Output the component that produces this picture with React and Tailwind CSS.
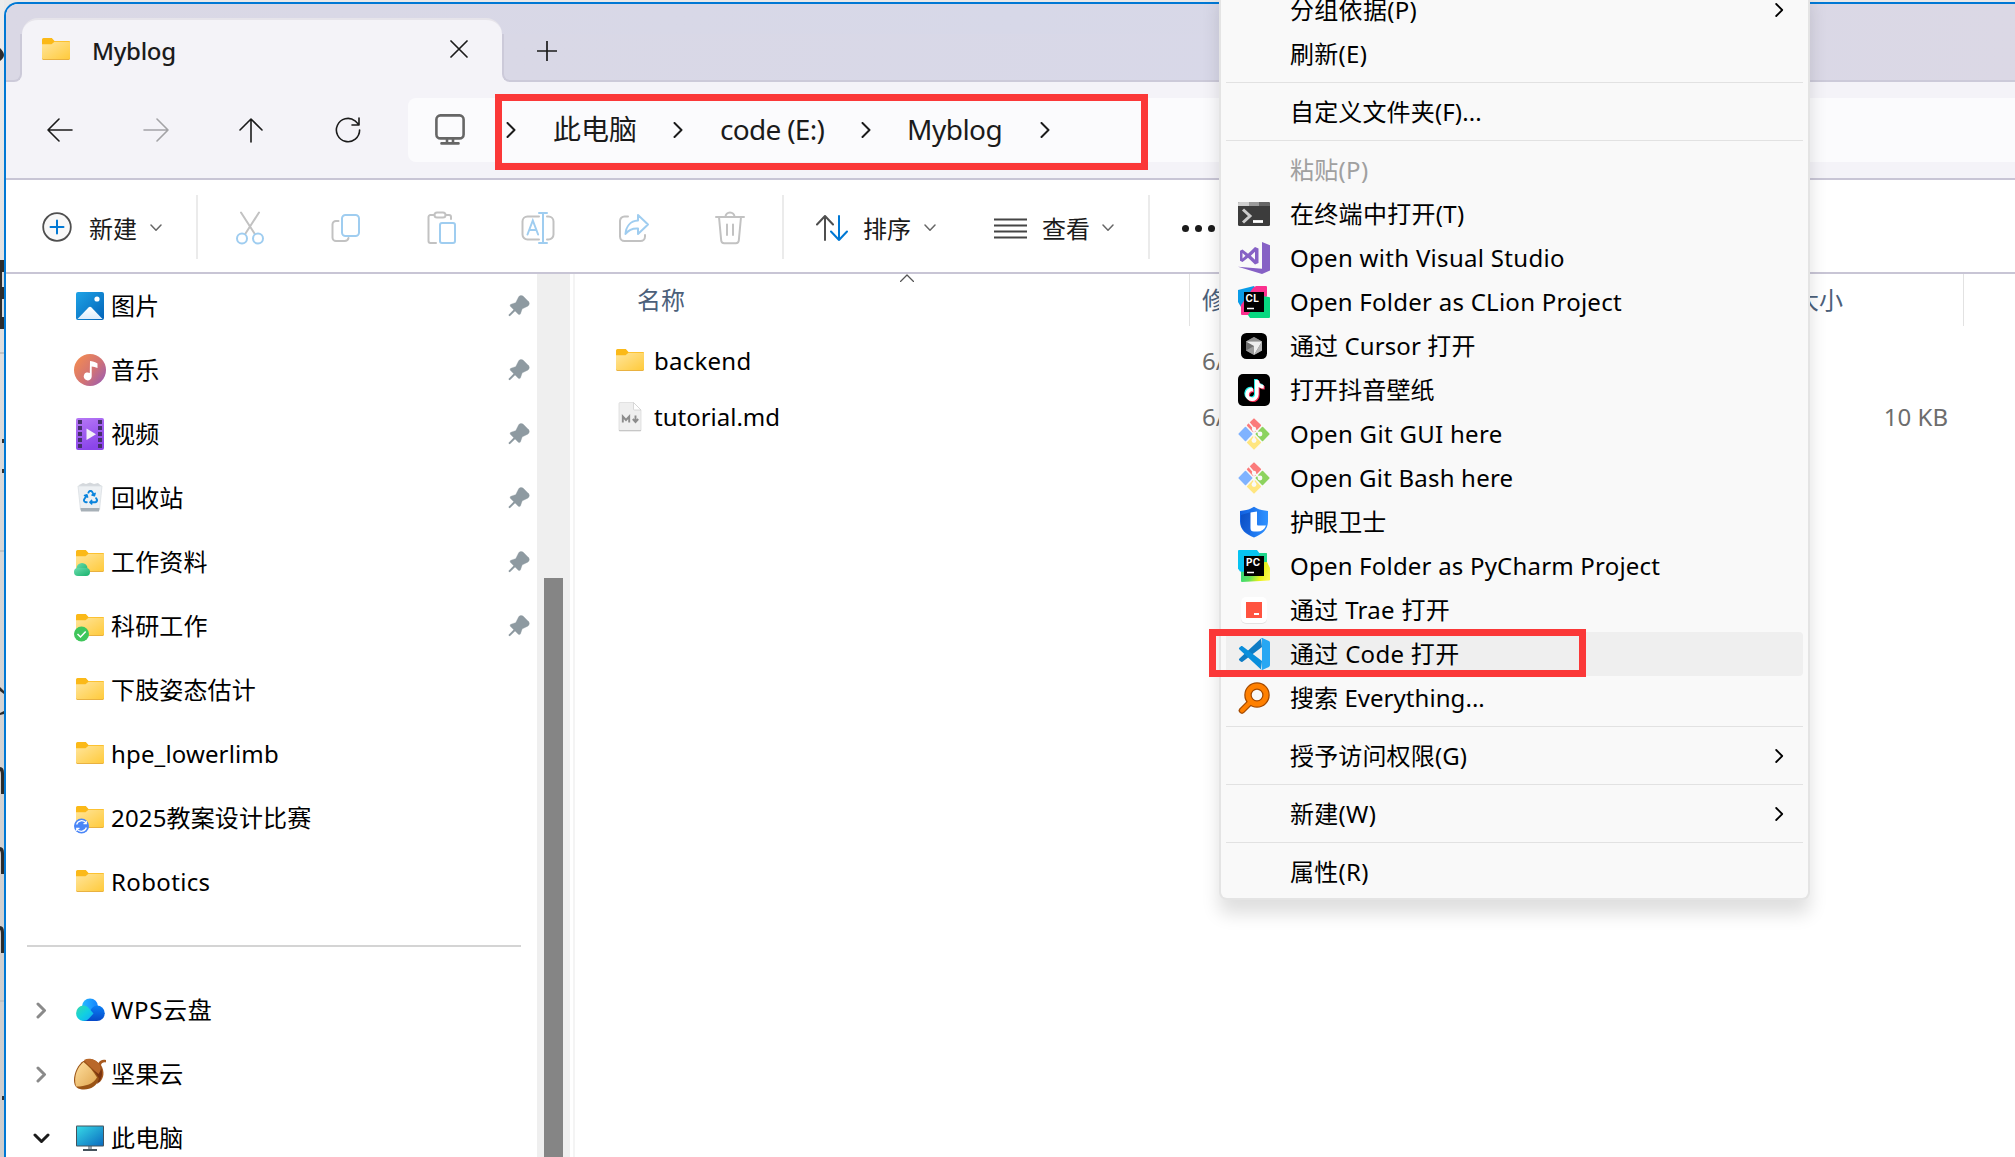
import React from 'react';
import { FaTiktok, FaRecycle } from 'react-icons/fa6';

/* ---------- line icons ---------- */

function Line({ w, h, children, className = '', sw = 2 }) {
  return (
    <svg
      width={w}
      height={h}
      viewBox={`0 0 ${w} ${h}`}
      fill="none"
      stroke="currentColor"
      strokeWidth={sw}
      strokeLinecap="round"
      strokeLinejoin="round"
      className={`block shrink-0 ${className}`}
    >
      {children}
    </svg>
  );
}

const ChevronRight = ({ className = '' }) => (
  <Line w={10} h={16} className={className}>
    <path d="M1.5 1l7 7-7 7" />
  </Line>
);

const ChevronDownSmall = () => (
  <Line w={12} h={8} sw={1.5} className="text-[#666]">
    <path d="M1 1l5 5.2L11 1" />
  </Line>
);

const BackIcon = () => (
  <Line w={26} h={24} className="text-[#1b1b1b]" sw={1.6}>
    <path d="M1 12h24M12 1L1 12l11 11" />
  </Line>
);
const ForwardIcon = () => (
  <Line w={26} h={24} className="text-[#a3a3a6]" sw={1.6}>
    <path d="M25 12H1M14 1l11 11-11 11" />
  </Line>
);
const UpIcon = () => (
  <Line w={24} h={25} className="-translate-x-px text-[#1b1b1b]" sw={1.6}>
    <path d="M12 1v23M1 12L12 1l11 11" />
  </Line>
);
const RefreshIcon = () => (
  <Line w={26} h={26} className="text-[#1b1b1b]" sw={1.6}>
    <path d="M24.6 13A11.6 11.6 0 1 1 20 3.8l4 4M24 1v7h-7" />
  </Line>
);
const MonitorIcon = () => (
  <Line w={30} h={31} className="-translate-y-px text-[#666]" sw={2.6}>
    <rect x="1.4" y="1.4" width="27.2" height="23" rx="4" />
    <path d="M12 25v4M18 25v4M6.5 29.4h17" />
  </Line>
);

const NewIcon = () => (
  <svg width="30" height="30" viewBox="0 0 30 30" fill="none" className="mt-px block">
    <circle cx="15" cy="15" r="13.8" stroke="#4f4f4f" strokeWidth="1.8" fill="#f8f8f8" />
    <path d="M15 8.5v13M8.5 15h13" stroke="#0078d4" strokeWidth="2" strokeLinecap="round" />
  </svg>
);

const GREY = '#c2c2c2';
const BLUE = '#9fcdf0';

const CutIcon = () => (
  <svg width="30" height="34" viewBox="0 0 30 34" fill="none" strokeWidth="2" strokeLinecap="round">
    <path d="M6 1.5l13.5 21M24 1.5L10.5 22.5" stroke={GREY} />
    <circle cx="7" cy="27.5" r="5" stroke={BLUE} />
    <circle cx="23" cy="27.5" r="5" stroke={BLUE} />
  </svg>
);
const CopyIcon = () => (
  <svg width="30" height="30" viewBox="0 0 30 30" fill="none" strokeWidth="2" strokeLinecap="round">
    <path d="M7.5 8H5a3.5 3.5 0 0 0-3.5 3.5v13A3.5 3.5 0 0 0 5 28h8.5a4 4 0 0 0 4-3" stroke={GREY} />
    <rect x="11" y="2" width="17" height="21" rx="3.5" stroke={BLUE} />
  </svg>
);
const PasteIcon = () => (
  <svg width="30" height="34" viewBox="0 0 30 34" fill="none" strokeWidth="2" strokeLinecap="round">
    <path d="M7 4H3.5A2 2 0 0 0 1.5 6v24a2 2 0 0 0 2 2H9M19 4h3a2 2 0 0 1 2 2v2" stroke={GREY} />
    <rect x="7.5" y="1.5" width="11" height="5" rx="2.5" stroke={GREY} />
    <rect x="13" y="12" width="15" height="20" rx="2" stroke={BLUE} />
  </svg>
);
const RenameIcon = () => (
  <svg width="34" height="34" viewBox="0 0 34 34" fill="none" strokeWidth="2" strokeLinecap="round">
    <path d="M18 5.5H6.5a5 5 0 0 0-5 5v13a5 5 0 0 0 5 5H18M26 5.5h1.5a5 5 0 0 1 5 5v13a5 5 0 0 1-5 5H26" stroke={GREY} />
    <path d="M22 2v30M18 2h8M18 32h8M6.5 23.5l5.3-14 5.3 14M8.3 19h7" stroke={BLUE} />
  </svg>
);
const ShareIcon = () => (
  <svg width="32" height="30" viewBox="0 0 32 30" fill="none" strokeWidth="2" strokeLinecap="round" strokeLinejoin="round">
    <path d="M10 3.5H6.5A4.5 4.5 0 0 0 2 8v15.5A4.5 4.5 0 0 0 6.5 28h16a4.5 4.5 0 0 0 4.5-4.5V22" stroke={GREY} />
    <path d="M20 2l10 9.5L20 21v-5.5c-5-.3-9.5 1.5-12.5 5.5C8 14 12 8 20 7.5z" stroke={BLUE} />
  </svg>
);
const TrashIcon = () => (
  <svg width="30" height="34" viewBox="0 0 30 34" fill="none" stroke={GREY} strokeWidth="2" strokeLinecap="round" strokeLinejoin="round">
    <path d="M1 6h28M10.5 6a4.5 4.5 0 0 1 9 0M4 6l2.200 23.5A3 3 0 0 0 9.200 32.200h11.600a3 3 0 0 0 3-2.700L26 6M12 13.5v10.5M18 13.5v10.5" />
  </svg>
);
const SortIcon = () => (
  <svg width="32" height="26" viewBox="0 0 32 26" fill="none" strokeWidth="2" strokeLinecap="round" strokeLinejoin="round">
    <path d="M9 25V1M1 9.5L9 1l8 8.5" stroke="#4f4f4f" />
    <path d="M23 1v24M15 16.5l8 8.5 8-8.5" stroke="#0078d4" />
  </svg>
);
const ViewIcon = () => (
  <svg width="33" height="21" viewBox="0 0 33 21" stroke="#454545" strokeWidth="1.8">
    <path d="M0 1.5h33M0 7.5h33M0 13.5h33M0 19.5h33" />
  </svg>
);

const PinIcon = () => (
  <svg width="22" height="22" viewBox="2 2 20.5 20" fill="#8e9aa1" stroke="#8e9aa1" strokeLinecap="round">
    <path
      strokeWidth="0.3"
      d="m21.068 7.758-4.826-4.826a2.750 2.750 0 0 0-4.404.715l-2.435 4.870a.750.750 0 0 1-.426.374l-4.166 1.440a1.250 1.250 0 0 0-.476 2.065l7.270 7.268a1.250 1.250 0 0 0 2.065-.476l1.440-4.166a.750.750 0 0 1 .373-.426l4.870-2.435a2.750 2.750 0 0 0 .715-4.404Z"
    />
    <path d="M3.5 20.5l5-5" strokeWidth="1.9" />
  </svg>
);

/* ---------- sidebar and file icons ---------- */

function FolderIcon({ badge }) {
  return (
    <svg width="32" height="32" viewBox="0 0 32 32" className="block shrink-0">
      <defs>
        <linearGradient id="folderFace" x1="0" y1="0" x2="1" y2="1">
          <stop offset="0" stopColor="#ffe59c" />
          <stop offset="1" stopColor="#ffca3a" />
        </linearGradient>
        <linearGradient id="cloudBadge" x1="0" y1="0" x2="1" y2="1">
          <stop offset="0" stopColor="#6bdcae" />
          <stop offset="1" stopColor="#18b26c" />
        </linearGradient>
      </defs>
      <g transform="translate(0 -1)">
        <path d="M2 6.5A1.5 1.5 0 0 1 3.5 5h8.300l2.700 3H29a1 1 0 0 1 1 1v4H2z" fill="#fbb918" />
        <path d="M2 11.300h9.500L14.500 8.800H29a1 1 0 0 1 1 1V25.500a1 1 0 0 1-1 1H3a1 1 0 0 1-1-1z" fill="url(#folderFace)" />
        <path d="M2 25.300a1.400 1.400 0 0 0 1.300 1.500h25.400a1.400 1.400 0 0 0 1.300-1.500l-.8.600H2.800z" fill="#e2a01f" />
      </g>
      {badge === 'cloud' && (
        <g fill="url(#cloudBadge)">
          <circle cx="8" cy="22.500" r="5.500" />
          <rect x="0" y="22" width="16" height="8" rx="4" />
        </g>
      )}
      {badge === 'check' && (
        <g>
          <circle cx="7.500" cy="24" r="7.500" fill="#3fc65b" />
          <path d="M3.500 24l3 3 5.200-5.500" stroke="#fff" strokeWidth="1.500" fill="none" />
        </g>
      )}
      {badge === 'sync' && (
        <g transform="translate(0 -0.5)">
          <circle cx="7.500" cy="24.500" r="7.500" fill="#4a86f7" />
          <path d="M2.600 23a5.200 5.200 0 0 1 9.300-1.500M12.400 26a5.200 5.200 0 0 1-9.300 1.500M12.300 19.500v2.600H9.500M2.700 29.500v-2.600h2.800" stroke="#fff" strokeWidth="1.200" fill="none" />
        </g>
      )}
    </svg>
  );
}

const PicturesIcon = () => (
  <svg width="32" height="32" viewBox="0 0 32 32">
    <defs>
      <linearGradient id="pic" x1="0" y1="0" x2="1" y2="1">
        <stop offset="0" stopColor="#1ea3e6" />
        <stop offset="1" stopColor="#0363b8" />
      </linearGradient>
      <linearGradient id="hill" x1="0" y1="0" x2="0" y2="1">
        <stop offset="0" stopColor="#fff" />
        <stop offset="1" stopColor="#dcecfb" />
      </linearGradient>
    </defs>
    <rect x="2" y="2" width="28" height="28" rx="2" fill="url(#pic)" />
    <path d="M3.5 29L14.5 17.5q1.5-1.300 3 0L28.5 29z" fill="url(#hill)" />
    <circle cx="23" cy="9" r="2.600" fill="#fff" />
  </svg>
);

const MusicIcon = () => (
  <svg width="32" height="32" viewBox="0 0 32 32">
    <defs>
      <linearGradient id="mus" x1="0" y1="0.1" x2="1" y2="0.9">
        <stop offset="0" stopColor="#f58d4f" />
        <stop offset="0.55" stopColor="#d27374" />
        <stop offset="1" stopColor="#9a5cb4" />
      </linearGradient>
    </defs>
    <circle cx="16" cy="16" r="16" fill="url(#mus)" />
    <path d="M16 7c2 .2 5.500 1 7.500 2.500V14c-2-1-4-1.500-5.800-1.600V22.500A4 4 0 1 1 15.800 19z" fill="#fff" />
  </svg>
);

const VideoIcon = () => (
  <svg width="32" height="32" viewBox="0 0 32 32">
    <defs>
      <linearGradient id="vid" x1="0" y1="0" x2="0.3" y2="1">
        <stop offset="0" stopColor="#b678f5" />
        <stop offset="1" stopColor="#8b45ea" />
      </linearGradient>
    </defs>
    <rect x="2" y="0" width="28" height="32" rx="2" fill="url(#vid)" />
    <g fill="#46306e">
      {[2, 8, 14, 20, 26].map((y) => (
        <React.Fragment key={y}>
          <rect x="4" y={y} width="4" height="4" />
          <rect x="24" y={y} width="4" height="4" />
        </React.Fragment>
      ))}
    </g>
    <path d="M12.500 10.500v11.500l9.500-5.700z" fill="#f4f1f9" />
  </svg>
);

const RecycleBinIcon = () => (
  <span className="relative flex size-8 items-center justify-center">
    <svg width="32" height="32" viewBox="0 0 32 32" className="block">
      <path d="M5 3l4-2 3 1 4-1.500L20 2l4-1 3.500 3-1 3H6z" fill="#d4d8dc" />
      <path d="M4 4h24l-2.500 24H6.500z" fill="#edf0f3" stroke="#d9dee2" strokeWidth="0.8" />
      <path d="M6.500 26h19l-.5 3.500H7z" fill="#a7b0b7" />
    </svg>
    <FaRecycle className="absolute top-[8px] left-[8.5px] size-[15px] text-[#0a84dd]" />
  </span>
);

const WpsCloudIcon = () => (
  <svg width="32" height="32" viewBox="0 0 32 32">
    <defs>
      <linearGradient id="wpsA" x1="0" y1="0" x2="1" y2="1">
        <stop offset="0" stopColor="#38d9a9" />
        <stop offset="0.5" stopColor="#12d0e0" />
        <stop offset="1" stopColor="#12a8ff" />
      </linearGradient>
      <linearGradient id="wpsB" x1="0" y1="0" x2="1" y2="0">
        <stop offset="0" stopColor="#27b9ff" />
        <stop offset="1" stopColor="#1483ff" />
      </linearGradient>
      <linearGradient id="wpsC" x1="0" y1="0" x2="0" y2="1">
        <stop offset="0" stopColor="#0a80f5" />
        <stop offset="1" stopColor="#0648c8" />
      </linearGradient>
    </defs>
    <circle cx="16" cy="12.500" r="8" fill="url(#wpsB)" />
    <path d="M23 11.500a7.500 7.500 0 0 1 0 15.500H9l9-13a7.500 7.500 0 0 1 5-2.500z" fill="url(#wpsC)" />
    <path d="M9 11.500c3 0 5 1.500 6.500 3.500l4 4.500-4.500 5c-1.500 1.700-3.500 2.500-6 2.500a7.800 7.800 0 0 1 0-15.500z" fill="url(#wpsA)" />
  </svg>
);

const NutIcon = () => (
  <svg width="34" height="34" viewBox="0 0 34 34" className="shrink-0">
    <defs>
      <linearGradient id="nut" x1="0" y1="0" x2="1" y2="1">
        <stop offset="0" stopColor="#ffe0a0" />
        <stop offset="1" stopColor="#e0a650" />
      </linearGradient>
    </defs>
    <path d="M10 4.500C16 0 22 2 25.500 6c1-2.500 4-4 7.500-3v2.500c-2.500-.5-4.500.5-5 2.500 4 7 3 13-1.500 17.500z" fill="#a85a20" />
    <path d="M11 3.500C17 9 23 15 24.500 27c6-6 5.500-14 2-19z" fill="#7a3510" />
    <path d="M11 3C16 0.500 23 2 27 8.500c1.500 3 1 5-1.500 8.500C21 13 15 9 11 3z" fill="#b9682a" />
    <path d="M10.500 4C16 8 22 14 26 21.500 24 29 18 32.500 11 32.500 5 32.500 1 30.500 1 23S5.500 7 10.500 4z" fill="#9a5416" />
    <path d="M10.500 5C15.500 9 20.500 14 24 20.500 20 27 13 29.500 3 29.500 0 19 5 9.500 10.500 5z" fill="url(#nut)" />
  </svg>
);

const ThisPcIcon = () => (
  <svg width="32" height="32" viewBox="0 0 32 32">
    <defs>
      <linearGradient id="pc" x1="0" y1="0" x2="1" y2="1">
        <stop offset="0" stopColor="#36d8e6" />
        <stop offset="1" stopColor="#0b6cc0" />
      </linearGradient>
    </defs>
    <path d="M14 24h4v4h-4z" fill="#9aa5ad" />
    <path d="M9 27h14v2H9z" fill="#46535c" />
    <rect x="2" y="3.500" width="28" height="21" rx="1" fill="#44525c" />
    <rect x="3" y="4.500" width="26" height="19" fill="url(#pc)" />
  </svg>
);

const MarkdownFileIcon = () => (
  <svg width="24" height="30" viewBox="0 0 24 30" className="block">
    <path d="M1 1.500A1 1 0 0 1 2 .5h13.500L23 8v20a1 1 0 0 1-1 1H2a1 1 0 0 1-1-1z" fill="#efefef" stroke="#dcdcdc" strokeWidth="0.8" />
    <path d="M15.500.5V7a1 1 0 0 0 1 1H23z" fill="#fff" stroke="#cfcfcf" strokeWidth="0.8" />
    <path d="M1 28.600h22" stroke="#c4c4c4" strokeWidth="1" />
    <g stroke="#8c8c8c" strokeWidth="1.900" fill="none">
      <path d="M4.800 20.500v-6l3.200 3.500 3.200-3.500v6" />
      <path d="M17.500 13.500v6M14.800 17l2.700 3 2.700-3" />
    </g>
  </svg>
);

/* ---------- context menu icons ---------- */

const TerminalIcon = () => (
  <svg width="32" height="32" viewBox="0 0 32 32">
    <rect x="0" y="4" width="32" height="24" rx="1.500" fill="#3c3c3c" />
    <path d="M0 5.500A1.500 1.500 0 0 1 1.500 4H11v4H0z" fill="#cfcfcf" />
    <path d="M11 4h10v4H11z" fill="#9a9a9a" />
    <path d="M21 4h9.500A1.500 1.500 0 0 1 32 5.500V8H21z" fill="#666" />
    <path d="M5 11.500l7 6.500-7 6.500" fill="none" stroke="#ccc" strokeWidth="3" />
    <path d="M15 23.500h10" stroke="#fff" strokeWidth="2.800" />
  </svg>
);

const VisualStudioIcon = () => (
  <svg width="32" height="32" viewBox="0 0 32 32" fill="#8661c5">
    <path d="M24 0l8 3.300v25.200L24 32 0 24.800l24 1.900z" />
    <path
      fillRule="evenodd"
      d="M2 8.700L4.500 7.500l5.500 4.200 7-6.700 3.500 1.500V21L17 22.500l-7-6.700L4.500 20 2 18.800zM4.500 11v5.500l3-2.700zM17 9.800l-4.200 4L17 17.700z"
    />
  </svg>
);

const CLionIcon = () => (
  <svg width="32" height="32" viewBox="0 0 32 32">
    <path d="M0 4L16 0l8 12-18 14L0 16z" fill="#099ce8" />
    <path d="M15 2l3-2h10a1 1 0 0 1 1 1v9l-5 10L12 29H4a1 1 0 0 1-1-1v-9z" fill="#fb308e" />
    <path d="M24 10l7 1a1 1 0 0 1 1 1v19a1 1 0 0 1-1 1H12l-2-3z" fill="#07d880" />
    <path d="M6 6h20v20H6z" fill="#000" />
    <path d="M9 22.500h7" stroke="#fff" strokeWidth="1.500" />
    <text x="7.500" y="16" fontFamily="Inter, sans-serif" fontWeight="700" fontSize="10" fill="#fff">CL</text>
  </svg>
);

const PyCharmIcon = () => (
  <svg width="32" height="32" viewBox="0 0 32 32">
    <defs>
      <linearGradient id="pyc" x1="0" y1="0.300" x2="1" y2="0.700">
        <stop offset="0" stopColor="#21d789" />
        <stop offset="0.450" stopColor="#5fe05a" />
        <stop offset="0.750" stopColor="#e6f01a" />
        <stop offset="1" stopColor="#fcf84a" />
      </linearGradient>
    </defs>
    <path d="M16 3h12a1 1 0 0 1 1 1v8l3 6v11a1 1 0 0 1-1 1.500L4 32a1 1 0 0 1-1-1V20z" fill="url(#pyc)" />
    <path d="M16 3h12a1 1 0 0 1 1 1v8H16z" fill="#1fd78c" />
    <path d="M1 0h18l3 4-14 18-6-.500-2-3V1a1 1 0 0 1 1-1z" fill="#07c3f2" />
    <path d="M6 6h20v20H6z" fill="#000" />
    <path d="M9 22.500h7" stroke="#fff" strokeWidth="1.500" />
    <text x="8" y="16" fontFamily="Inter, sans-serif" fontWeight="700" fontSize="10" fill="#fff">PC</text>
  </svg>
);

const CursorIcon = () => (
  <svg width="32" height="32" viewBox="0 0 32 32">
    <rect x="3" y="3" width="26" height="26" rx="5.500" fill="#000" />
    <path d="M16 7l8 4.500v9L16 25l-8-4.500v-9z" fill="#6f6f6f" />
    <path d="M16 7l8 4.500-16 0z" fill="#8f8f8f" />
    <path d="M8 20.500l8-4.500v9z" fill="#9b9b9b" />
    <path d="M8 11.500h16L16 25v-9z" fill="#eee" />
    <path d="M24 11.500v9L16 25z" fill="#b5b5b5" />
  </svg>
);

const DouyinIcon = () => (
  <span className="relative block size-8 rounded-[5px] bg-black">
    <FaTiktok className="absolute top-[5px] left-[5px] size-[21px] text-[#25f4ee]" />
    <FaTiktok className="absolute top-[7px] left-[7px] size-[21px] text-[#fe2c55]" />
    <FaTiktok className="absolute top-[6px] left-[6px] size-[21px] text-white" />
  </span>
);

const GitIcon = () => (
  <svg width="32" height="32" viewBox="0 0 32 32">
    <g strokeLinejoin="round" strokeWidth="1.600">
      <path d="M16 1.200l6.300 6.200-6.300 6.500-6.300-6.500z" fill="#fb7b7b" stroke="#fb7b7b" />
      <path d="M7.500 9.500l6.200 6.500-6.200 6.500L1.200 16z" fill="#80b3ff" stroke="#80b3ff" />
      <path d="M24.500 9.500l6.300 6.500-6.300 6.500-6.200-6.500z" fill="#8dd35f" stroke="#8dd35f" />
      <path d="M16 18l6.300 6.500-6.300 6.300-6.300-6.300z" fill="#ffe680" stroke="#ffe680" />
    </g>
    <path d="M10.500 4l5.500 6.500v12M16 10.500l6 5.500" stroke="#f9f9f9" strokeWidth="1.600" fill="none" />
    <circle cx="16" cy="11" r="2.200" fill="#f9f9f9" />
    <circle cx="22" cy="16" r="2.400" fill="#f9f9f9" />
    <circle cx="16" cy="22.500" r="2.400" fill="#f9f9f9" />
  </svg>
);

const EyeGuardIcon = () => (
  <svg width="32" height="32" viewBox="0 0 32 32">
    <defs>
      <linearGradient id="guard" x1="0" y1="0" x2="1" y2="1">
        <stop offset="0" stopColor="#0a4fc4" />
        <stop offset="1" stopColor="#1a66dd" />
      </linearGradient>
      <linearGradient id="guardEdge" x1="0" y1="0" x2="1" y2="0">
        <stop offset="0" stopColor="#0f5fe0" />
        <stop offset="1" stopColor="#2f92ff" />
      </linearGradient>
    </defs>
    <path d="M16 .8c4 2.500 8.500 3.700 14 4.200v10.500c0 8-6 13-14 16C8 28.500 2 23.500 2 15.500V5C7.500 4.500 12 3.300 16 .8z" fill="url(#guardEdge)" />
    <path d="M13 6L3 9v7c0 6 4 10 9 13z" fill="url(#guard)" />
    <path d="M12.500 6.500l6.500-1V18c0 1 .5 1.500 1.500 1.500h7.500c-1.500 4-4.500 6-8.500 6h-3.500c-2.500 0-3.500-1-3.500-3.500z" fill="#fff" />
  </svg>
);

const TraeIcon = () => (
  <svg width="32" height="32" viewBox="0 0 32 32">
    <rect x="3" y="4" width="26" height="26" rx="5" fill="#e3e3e3" />
    <rect x="3" y="3" width="26" height="26" rx="5" fill="#fff" />
    <rect x="8" y="8" width="16" height="16" fill="#ff5340" />
    <rect x="16" y="19" width="5" height="2" fill="#fff" />
  </svg>
);

const CodeIcon = () => (
  <svg width="32" height="32" viewBox="0 0 32 32">
    <path d="M23 .5L1.500 20.500c-.8.700-.8 1.300 0 2l1.200 1.100c.6.500 1.200.5 1.800.1L24 9z" fill="#0f7cc4" />
    <path d="M23 31.500L1.500 11.500c-.8-.7-.8-1.300 0-2l1.200-1.100c.6-.5 1.200-.5 1.800-.1L24 23z" fill="#0a8fdc" />
    <path d="M23 31.600c1 .4 1.500.4 2.300 0l5.600-2.700c.7-.4 1.100-.9 1.100-1.800V4.900c0-.9-.4-1.400-1.100-1.800L25.300.4c-.8-.4-1.500-.4-2.300 0 .8.2 1 .8 1 1.600v28c0 .8-.2 1.400-1 1.600z" fill="#27a7f3" />
  </svg>
);

const EverythingIcon = () => (
  <svg width="32" height="32" viewBox="0 0 32 32" fill="none" strokeLinecap="round">
    <path d="M4 28.500l9-9" stroke="#a44a00" strokeWidth="6.500" />
    <circle cx="19" cy="13" r="9" stroke="#a44a00" strokeWidth="7.500" />
    <path d="M4 28.500l9-9" stroke="#ff8000" strokeWidth="4" />
    <circle cx="19" cy="13" r="9" stroke="#ff8000" strokeWidth="5" />
  </svg>
);

/* ---------- window sections ---------- */

function BackdropEdge() {
  return (
    <div className="h-full w-1 shrink-0 overflow-hidden bg-linear-to-b from-[#ececec] via-[#d6d6d6] to-[#cdcdcd]">
      <svg width="4" height="1157" viewBox="0 0 4 1157" className="block">
        <path d="M0 48q4 4 4 7t-4 6z" fill="#2d2d2d" />
        <path d="M0 260h4v69H0z" fill="#2d2d2d" />
        <path d="M2 272h2v15H2zM2 299h2v18H2z" fill="#d8d8d8" />
        <path d="M0 687l4 4v3l-4-3zM0 713l4-2v3l-4 1z" fill="#2d2d2d" />
        <path d="M0 767q4 0 4 6v21H1v-18q0-5-1-5zM0 847q4 0 4 6v21H1v-18q0-5-1-5zM0 926q4 0 4 6v21H1v-18q0-5-1-5z" fill="#2d2d2d" />
        <path d="M0 353h4M0 551h4M0 1001h4" stroke="#c2c2c2" strokeWidth="2" />
        <path d="M2 439h2v4H2zM2 469h2v4H2zM2 1096h2v4H2z" fill="#333" />
      </svg>
    </div>
  );
}

function TabStrip() {
  return (
    <div className="flex h-[78px] bg-linear-to-r from-[#dad8e5] via-[#d7d8e8] to-[#dbd8e5]">
      <div className="flex w-4 flex-col justify-end">
        <div className="h-12 bg-[#f4f3f8]">
          <div className="h-full rounded-br-lg border-r-2 border-b-2 border-[#cccad9] bg-[#dad8e5]" />
        </div>
      </div>
      <div className="flex w-[480px] flex-col justify-end">
        <div className="flex h-16 items-center rounded-t-2xl border-t-2 border-[#e6e4ea] bg-[#f4f3f8] pr-[34px] pb-1.5 pl-[18px]">
          <div className="mt-1"><FolderIcon /></div>
          <span className="mt-1.5 ml-5 text-2xl leading-none font-medium tracking-[-0.3px] text-[#1b1b1b]">Myblog</span>
          <Line w={18} h={18} sw={1.7} className="mt-0.5 ml-auto text-[#1b1b1b]">
            <path d="M1 1l16 16M17 1L1 17" />
          </Line>
        </div>
      </div>
      <div className="flex flex-1 flex-col justify-end">
        <div className="h-12 bg-[#f4f3f8]">
          <div className="h-full rounded-bl-lg border-b-2 border-l-2 border-[#cccad9] bg-linear-to-r from-[#d9d8e6] via-[#d8d8e8] to-[#dbd8e5] pt-[7px] pl-[33px]">
            <Line w={20} h={20} sw={1.7} className="text-[#1b1b1b]">
              <path d="M10 0v20M0 10h20" />
            </Line>
          </div>
        </div>
      </div>
    </div>
  );
}

function AddressRow() {
  return (
    <div className="flex h-[98px] items-center border-b-2 border-[#c8c5d5] bg-[#f4f3f8] pl-1.5">
      {[BackIcon, ForwardIcon, UpIcon, RefreshIcon].map((Icon, i) => (
        <div key={i} className="flex w-24 justify-center">
          <Icon />
        </div>
      ))}
      <div className="ml-3 flex h-16 flex-1 items-center rounded-l-lg bg-[#fbfbfd] pl-[27px] text-[28px] text-[#1b1b1b]">
        <MonitorIcon />
        <div className="ml-[41px] w-[47px]"><ChevronRight /></div>
        <div className="mb-0.5 w-30 leading-none whitespace-nowrap">此电脑</div>
        <div className="w-[47px]"><ChevronRight /></div>
        <div className="mb-0.5 w-[141px] leading-none tracking-[-0.7px] whitespace-nowrap">code (E:)</div>
        <div className="w-[46px]"><ChevronRight /></div>
        <div className="mb-0.5 w-[133px] leading-none tracking-[-0.5px]">Myblog</div>
        <ChevronRight />
      </div>
    </div>
  );
}

const ToolDivider = () => <div className="mt-0.5 h-16 w-0.5 shrink-0 bg-[#ebebeb]" />;

function Toolbar() {
  return (
    <div className="flex h-[94px] items-center border-b-2 border-[#c8c5d5] bg-white pl-9 text-2xl text-[#1b1b1b]">
      <NewIcon />
      <span className="mt-1.5 ml-[17px] w-[61px] leading-none">新建</span>
      <div className="w-[46px] pt-1"><ChevronDownSmall /></div>
      <ToolDivider />
      <div className="mt-[3px] ml-1 flex">
        {[CutIcon, CopyIcon, PasteIcon, RenameIcon, ShareIcon, TrashIcon].map((Icon, i) => (
          <div key={i} className="flex h-10 w-24 items-center justify-center">
            <Icon />
          </div>
        ))}
      </div>
      <div className="ml-1" />
      <ToolDivider />
      <div className="mt-1 ml-8"><SortIcon /></div>
      <span className="mt-1.5 ml-[15px] w-[61px] leading-none">排序</span>
      <div className="w-[70px] pt-1"><ChevronDownSmall /></div>
      <div className="mt-1"><ViewIcon /></div>
      <span className="mt-1.5 ml-[15px] w-[60px] leading-none">查看</span>
      <div className="w-[46px] pt-1"><ChevronDownSmall /></div>
      <ToolDivider />
      <div className="mt-1 ml-8 flex gap-1.5">
        <i className="size-[7px] rounded-full bg-[#1b1b1b]" />
        <i className="size-[7px] rounded-full bg-[#1b1b1b]" />
        <i className="size-[7px] rounded-full bg-[#1b1b1b]" />
      </div>
    </div>
  );
}

const quickAccess = [
  { label: '图片', icon: <PicturesIcon />, pinned: true },
  { label: '音乐', icon: <MusicIcon />, pinned: true },
  { label: '视频', icon: <VideoIcon />, pinned: true },
  { label: '回收站', icon: <RecycleBinIcon />, pinned: true },
  { label: '工作资料', icon: <FolderIcon badge="cloud" />, pinned: true },
  { label: '科研工作', icon: <FolderIcon badge="check" />, pinned: true },
  { label: '下肢姿态估计', icon: <FolderIcon /> },
  { label: 'hpe_lowerlimb', icon: <FolderIcon /> },
  { label: '2025教案设计比赛', icon: <FolderIcon badge="sync" /> },
  { label: 'Robotics', icon: <FolderIcon />, tracking: 'tracking-[0.35px]' },
];

const roots = [
  { label: 'WPS云盘', icon: <WpsCloudIcon />, state: 'closed', tracking: 'tracking-[0.7px]' },
  { label: '坚果云', icon: <NutIcon />, state: 'closed' },
  { label: '此电脑', icon: <ThisPcIcon />, state: 'open' },
];

function SideRow({ label, icon, pinned, state, tracking = 'tracking-[0.15px]' }) {
  return (
    <div className="flex h-16 shrink-0 items-center pr-[7px] pl-[18px]">
      <div className="flex w-[35px] justify-center">
        {state === 'closed' && (
          <Line w={11} h={17} sw={3} className="text-[#8a8a8a]">
            <path d="M2 2l6.500 6.500L2 15" />
          </Line>
        )}
        {state === 'open' && (
          <Line w={17} h={11} sw={3} className="text-[#1b1b1b]">
            <path d="M2 2l6.500 6.500L15 2" />
          </Line>
        )}
      </div>
      <div className="ml-[15px] flex w-8 shrink-0 justify-center">{icon}</div>
      <span className={`ml-[5px] flex-1 text-2xl leading-none whitespace-nowrap text-black ${tracking}`}>{label}</span>
      {pinned && <PinIcon />}
    </div>
  );
}

function Sidebar() {
  return (
    <div className="flex w-[531px] shrink-0 flex-col overflow-hidden">
      {quickAccess.map((r) => (
        <SideRow key={r.label} {...r} />
      ))}
      <div className="flex h-16 shrink-0 items-center pr-4 pl-[21px]">
        <div className="h-0.5 w-full bg-[#d4d4d4]" />
      </div>
      {roots.map((r) => (
        <SideRow key={r.label} {...r} />
      ))}
    </div>
  );
}

function FileList() {
  return (
    <div className="flex flex-1 flex-col border-l-2 border-[#f4f4f4] text-2xl leading-none">
      <div className="flex h-[52px] text-[#4c607a]">
        <div className="relative flex w-[615px] items-center border-r border-[#e2e2e2] pl-[62px]">
          名称
          <Line w={14} h={8} sw={1.3} className="absolute top-0 left-[325px] text-[#555]">
            <path d="M.5 7.500L7 1l6.500 6.500" />
          </Line>
        </div>
        <div className="flex w-[593px] items-center pl-3 whitespace-nowrap">修改日期</div>
        <div className="flex w-[181px] items-center border-r border-[#e2e2e2] pl-3">大小</div>
      </div>
      <div className="mt-[7px] flex h-14 items-center">
        <div className="flex w-[615px] items-center pl-[39px]">
          <FolderIcon />
          <span className="ml-2 tracking-[0.25px] text-black">backend</span>
        </div>
        <div className="pl-3 text-[#6d6d6d]">6/</div>
      </div>
      <div className="flex h-14 items-center">
        <div className="flex w-[615px] items-center pl-[43px]">
          <MarkdownFileIcon />
          <span className="ml-3 text-black">tutorial.md</span>
        </div>
        <div className="w-[593px] pl-3 text-[#6d6d6d]">6/</div>
        <div className="w-[165px] text-right text-[#6d6d6d]">10 KB</div>
      </div>
    </div>
  );
}

const menu = [
  { label: '分组依据(P)', sub: true },
  { label: '刷新(E)' },
  null,
  { label: '自定义文件夹(F)...', tracking: 'tracking-[0.15px]' },
  null,
  { label: '粘贴(P)', disabled: true },
  { label: '在终端中打开(T)', icon: <TerminalIcon /> },
  { label: 'Open with Visual Studio', icon: <VisualStudioIcon /> },
  { label: 'Open Folder as CLion Project', icon: <CLionIcon />, tracking: 'tracking-[0.25px]' },
  { label: '通过 Cursor 打开', icon: <CursorIcon />, tracking: 'tracking-[0.1px]' },
  { label: '打开抖音壁纸', icon: <DouyinIcon />, tracking: 'tracking-[0.1px]' },
  { label: 'Open Git GUI here', icon: <GitIcon /> },
  { label: 'Open Git Bash here', icon: <GitIcon />, tracking: 'tracking-[0.2px]' },
  { label: '护眼卫士', icon: <EyeGuardIcon />, tracking: 'tracking-[0.1px]' },
  { label: 'Open Folder as PyCharm Project', icon: <PyCharmIcon />, tracking: 'tracking-[0.2px]' },
  { label: '通过 Trae 打开', icon: <TraeIcon /> },
  { label: '通过 Code 打开', icon: <CodeIcon />, active: true },
  { label: '搜索 Everything...', icon: <EverythingIcon />, tracking: 'tracking-[0.05px]' },
  null,
  { label: '授予访问权限(G)', sub: true, tracking: 'tracking-[0.15px]' },
  null,
  { label: '新建(W)', sub: true },
  null,
  { label: '属性(R)' },
];

function ContextMenu() {
  return (
    <div className="absolute -top-3 left-[1219px] w-[591px] rounded-b-lg border-2 border-t-0 border-[#e4e4e4] bg-[#f9f9f9] px-[5px] pb-1 shadow-[0_14px_18px_rgba(0,0,0,0.13)]">
      {menu.map((m, i) =>
        m === null ? (
          <div key={i} className="flex h-3.5 items-start pt-1.5">
            <div className="h-px w-full bg-[#e2e2e2]" />
          </div>
        ) : (
          <div
            key={i}
            className={`flex h-11 items-center rounded pr-[19px] pl-3 text-2xl leading-none whitespace-nowrap ${m.tracking || 'tracking-[0.3px]'} ${m.active ? 'bg-[#efefef]' : ''} ${m.disabled ? 'text-[#a0a0a0]' : 'text-black'}`}
          >
            <div className="w-[52px] shrink-0">{m.icon}</div>
            <span className="flex-1">{m.label}</span>
            {m.sub && (
              <Line w={9} h={14} sw={1.8}>
                <path d="M1.200 1l6 6-6 6" />
              </Line>
            )}
          </div>
        ),
      )}
    </div>
  );
}

export default function App() {
  return (
    <div className="relative flex h-[1157px] w-[2015px] overflow-hidden bg-[#e9e9e9] font-['Noto_Sans','Noto_Sans_CJK_SC',sans-serif]">
      <BackdropEdge />
      <div className="mt-0.5 flex min-w-0 flex-1 flex-col overflow-hidden rounded-tl-[14px] border-t-2 border-l-2 border-[#0078d4] bg-white">
        <TabStrip />
        <AddressRow />
        <Toolbar />
        <div className="flex min-h-0 flex-1">
          <Sidebar />
          <div className="mr-[3px] flex w-[33px] shrink-0 justify-center bg-[#efefef] pt-[304px]">
            <div className="w-[19px] bg-[#858585]" />
          </div>
          <FileList />
        </div>
      </div>
      <ContextMenu />
      <div className="absolute top-[94px] left-[495px] h-[76px] w-[653px] border-7 border-[#fb3838]" />
      <div className="absolute top-[629px] left-[1209px] h-12 w-[377px] border-7 border-[#fb3838]" />
    </div>
  );
}
